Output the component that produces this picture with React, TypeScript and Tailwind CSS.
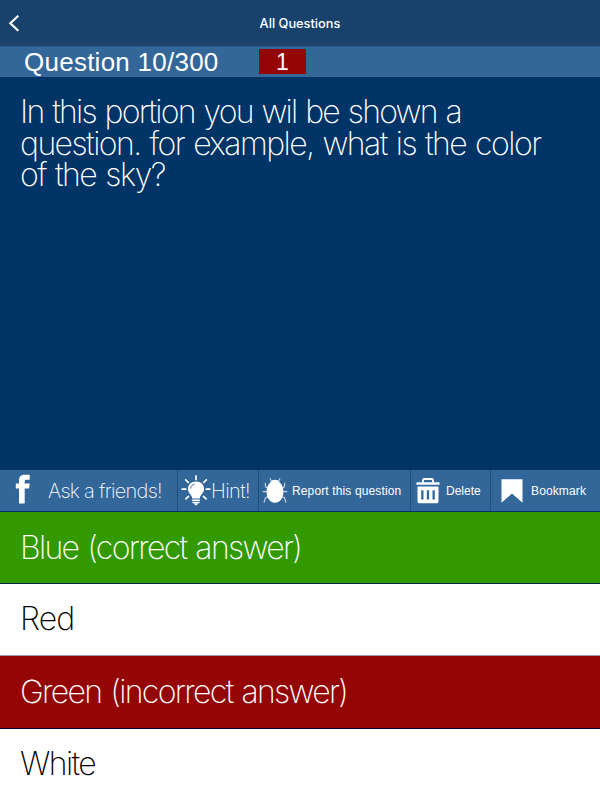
import React from 'react'

const FacebookIcon = () => (
  <svg className="shrink-0 -mt-1" width="16" height="30" viewBox="0 0 16 30">
    <path d="M4 29.500V14.500H.8V9.500H4V6.400C4 2.700 6 .8 9.800.8h4.900v5h-3c-1.500 0-2 .6-2 1.900v1.800h5l-.6 5H9.700v15z" fill="#fff" />
  </svg>
)

const BulbIcon = () => (
  <svg className="shrink-0" width="30" height="32" viewBox="0 0 30 32">
    <path d="M15 6.600c-4.800 0-8 3.200-8 7.300 0 4.600 4.200 5.600 4.200 9.600h7.600c0-4 4.200-5 4.200-9.600 0-4.100-3.200-7.300-8-7.300z" fill="#fff" />
    <path d="M11.600 25.200h6.800M12 27.500h6" stroke="#fff" strokeWidth="1.500" strokeLinecap="round" />
    <path d="M13 28.300h4l-1.200 2h-1.600z" fill="#fff" />
    <path d="M15 .9v3.600M4.700 4.900l2.600 2.600M25.300 4.900l-2.600 2.600M1.200 14.200h3.500M25.300 14.200h3.500M4.900 23.900l2.600-2.500M25.100 23.900l-2.600-2.500" stroke="#fff" strokeWidth="1.700" strokeLinecap="round" />
    <path d="M9.700 13.600c.1-2.200 1.500-3.900 3.800-4.400" stroke="#336699" strokeWidth=".9" fill="none" />
  </svg>
)

const BugIcon = () => (
  <svg className="shrink-0" width="26" height="28" viewBox="0 0 26 28">
    <g fill="none" stroke="#c5d5e5" strokeWidth="1.100">
      <path d="M11 5.200 9.200 4.200 8 1.200M15 5.200l1.800-1L18 1.200" />
      <path d="M6.500 11.500 3.600 9.800 3.300 5.800M19.500 11.500l2.900-1.700.3-4" />
      <path d="M6 14.600H.8M20 14.600h5.200" />
      <path d="M6.500 19.500 3.400 21 2 25.500M19.500 19.500l3.100 1.500L24 25.500" />
    </g>
    <path d="M8.500 5.200C9.200 3.400 10.800 2.700 13 2.700s3.800.7 4.500 2.500c2.500 1.800 3.900 5.400 3.900 9.600 0 6.800-3.700 10.900-8.400 10.900s-8.400-4.100-8.400-10.900c0-4.200 1.400-7.800 3.900-9.600z" fill="#fff" />
  </svg>
)

const TrashIcon = () => (
  <svg className="shrink-0" width="24" height="26" viewBox="0 0 24 26">
    <path d="M7 4.600V2.400c0-.9.500-1.400 1.400-1.400h7.200c.9 0 1.400.5 1.400 1.400v2.200" fill="none" stroke="#fff" strokeWidth="1.800" />
    <path d="M1.400 4.200h21.200c.6 0 1 .4 1 .9v1.600H.4V5.100c0-.5.400-.9 1-.9z" fill="#fff" />
    <path fillRule="evenodd" d="M1.500 8.600h21v14.800c0 1.100-.7 1.800-1.800 1.800H3.300c-1.100 0-1.800-.7-1.800-1.800zM5.200 12.300v9.200h2.300v-9.200zM10.800 12.300v9.200h2.300v-9.200zM16.500 12.300v9.200h2.300v-9.200z" fill="#fff" />
  </svg>
)

const BookmarkIcon = () => (
  <svg className="shrink-0" width="22" height="24" viewBox="0 0 22 24">
    <path d="M.5.300h21v23.400L11 14.500.5 23.700z" fill="#fff" />
  </svg>
)

const App = () => {
  return (
    <div className="flex h-[800px] w-[600px] flex-col overflow-hidden bg-[#003366] font-['Liberation_Sans',sans-serif] text-white">
      <header className="grid h-[46px] shrink-0 grid-cols-[1fr_auto_1fr] items-center bg-[#18416b]">
        <svg className="ml-2" width="12" height="18" viewBox="0 0 12 18">
          <path d="M10.300 1.800 2.300 9.300l8 7.500" fill="none" stroke="#fff" strokeWidth="2.200" />
        </svg>
        <h1 className="pt-px font-['Inter',sans-serif] text-[12.8px] font-medium">All Questions</h1>
        <span />
      </header>

      <div className="flex h-[31px] shrink-0 items-center border-t border-[#2c5c8b] bg-[#336699] pb-px">
        <p className="ml-6 w-[235px] whitespace-nowrap text-[26px] leading-[28px] tracking-[0.25px]">Question 10/300</p>
        <span className="h-[25px] w-[47px] bg-[#940606] text-center text-[23px] leading-[26px]">1</span>
      </div>

      <main className="flex-1 pl-[20px] pt-[19px] font-['Inter',sans-serif] text-[32px] font-[150] leading-[31.6px] [word-spacing:1.5px]">
        <p className="whitespace-nowrap tracking-[-1.76px]">In this portion you wil be shown a</p>
        <p className="whitespace-nowrap tracking-[-1.54px]">question. for example, what is the color</p>
        <p className="whitespace-nowrap tracking-[-1.5px]">of the sky?</p>
      </main>

      <nav className="flex h-[42px] shrink-0 items-stretch whitespace-nowrap border-b border-[#052f66] bg-[#336699] text-[12px] tracking-[0.13px]">
        <button className="flex w-[177px] items-center pl-[15px]">
          <FacebookIcon />
          <span className="ml-[17px] font-['Inter',sans-serif] text-[20px] font-extralight tracking-[-0.72px]">Ask a friends!</span>
        </button>
        <button className="flex w-[81px] items-center border-l border-[#1f4f82] pl-[3px]">
          <BulbIcon />
          <span className="font-['Inter',sans-serif] text-[20px] font-extralight tracking-[-0.6px]">Hint!</span>
        </button>
        <button className="flex w-[152px] items-center border-l border-[#1f4f82] pl-[3px]">
          <BugIcon />
          <span className="ml-1">Report this question</span>
        </button>
        <button className="flex w-[80px] items-center border-l border-[#1f4f82] pl-[5px]">
          <TrashIcon />
          <span className="ml-1.5 tracking-normal">Delete</span>
        </button>
        <button className="flex w-[110px] items-center border-l border-[#1f4f82] pl-[10px]">
          <BookmarkIcon />
          <span className="ml-2">Bookmark</span>
        </button>
      </nav>

      <section className="shrink-0 whitespace-nowrap font-['Inter',sans-serif] text-[32px] font-[150] [word-spacing:1.5px]">
        <div className="flex h-[72px] items-center border-b border-[#06263f] bg-[#339900] pl-[20px]">
          <span className="tracking-[-1.66px]">Blue (correct answer)</span>
        </div>
        <div className="flex h-[72px] items-center border-b border-[#999ab5] bg-white pb-px pl-[20px] text-black">
          <span className="tracking-[-0.9px]">Red</span>
        </div>
        <div className="flex h-[73px] items-center border-b border-[#06003f] bg-[#940606] pb-px pl-[20px]">
          <span className="tracking-[-1.66px]">Green (incorrect answer)</span>
        </div>
        <div className="flex h-[71px] items-center bg-white pb-[2px] pl-[20px] text-black">
          <span className="tracking-[-1.6px]">White</span>
        </div>
      </section>
    </div>
  )
}

export default App
